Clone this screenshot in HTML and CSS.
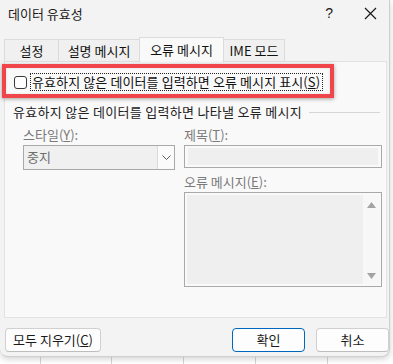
FILE: index.html
```html
<!DOCTYPE html>
<html>
	<head>
		<meta charset="UTF-8">
		<title>데이터 유효성</title>
		<link rel="stylesheet" href="styles.css">
	</head>
	<body>
		<div class="sheet">
			<div class="window">
				<div class="titlebar">
					<span class="title">데이터 유효성</span>
					<span class="help">?</span>
					<svg class="close" width="13" height="13" viewBox="0 0 13 13">
						<path d="M1 1L12 12M12 1L1 12" stroke="#1a1a1a" stroke-width="1.2" fill="none"/>
					</svg>
				</div>
				<div class="tabs">
					<div class="tab t1">설정</div>
					<div class="tab t2">설명 메시지</div>
					<div class="tab t3 on">오류 메시지</div>
					<div class="tab t4">IME 모드</div>
				</div>
				<div class="panel">
					<div class="check-row">
						<span class="checkbox"></span>
						<span class="check-label">유효하지 않은 데이터를 입력하면 오류 메시지 표시(<u>S</u>)</span>
					</div>
					<div class="group-head">
						<span>유효하지 않은 데이터를 입력하면 나타낼 오류 메시지</span>
						<span class="rule"></span>
					</div>
					<div class="fields">
						<div class="col left">
							<div class="label">스타일(<u>Y</u>):</div>
							<div class="select">
								<span class="value">중지</span>
								<span class="drop">
									<svg width="9" height="6" viewBox="0 0 9 6"><path d="M0.5 0.5L4.5 4.5L8.5 0.5" stroke="#5a5a5a" fill="none"/></svg>
								</span>
							</div>
						</div>
						<div class="col right">
							<div class="label">제목(<u>T</u>):</div>
							<div class="input"><div class="fill"></div></div>
							<div class="label second">오류 메시지(<u>E</u>):</div>
							<div class="textarea">
								<div class="fill"></div>
								<div class="scroll">
									<svg width="9" height="6" viewBox="0 0 9 6"><path d="M0 6L4.5 0L9 6Z" fill="#a3a3a3"/></svg>
									<svg width="9" height="6" viewBox="0 0 9 6"><path d="M0 0L4.5 6L9 0Z" fill="#a3a3a3"/></svg>
								</div>
							</div>
						</div>
					</div>
				</div>
				<div class="footer">
					<button class="btn clear">모두 지우기(<u>C</u>)</button>
					<span class="spacer"></span>
					<button class="btn ok">확인</button>
					<button class="btn cancel">취소</button>
				</div>
				<div class="highlight"></div>
			</div>
		</div>
	</body>
</html>
```

FILE: styles.css
```css
*{
	margin:0;
	padding:0;
	box-sizing:border-box;
}
body{
	width:393px;
	height:364px;
	overflow:hidden;
	font-family:"Noto Sans CJK KR","Noto Sans",sans-serif;
	font-size:13px;
	color:#1a1a1a;
	background:#fff;
}
.sheet{
	height:364px;
	background:
		linear-gradient(90deg,transparent 40px,#d6d6d6 40px,#d6d6d6 41px,transparent 41px),
		linear-gradient(90deg,transparent 111px,#d6d6d6 111px,#d6d6d6 112px,transparent 112px),
		linear-gradient(90deg,transparent 183px,#d6d6d6 183px,#d6d6d6 184px,transparent 184px),
		linear-gradient(90deg,transparent 255px,#d6d6d6 255px,#d6d6d6 256px,transparent 256px),
		linear-gradient(90deg,transparent 327px,#d6d6d6 327px,#d6d6d6 328px,transparent 328px),
		#fff;
}
.window{
	position:relative;
	width:390px;
	height:357px;
	background:#f3f3f3;
	border:1px solid #cfcfcf;
	border-top:none;
	border-left:none;
	border-radius:0 0 8px 8px;
	box-shadow:0 2px 6px rgba(0,0,0,0.18);
	display:flex;
	flex-direction:column;
}
.titlebar{
	height:28px;
	display:flex;
	align-items:center;
	padding:0 0 2px 8px;
}
.title{
	flex:1;
	line-height:15px;
}
.help{
	font-family:"Liberation Sans",sans-serif;
	font-size:14px;
	margin-right:31px;
}
.close{
	margin-right:12px;
}
.tabs{
	margin-top:9px;
	height:24px;
	padding-left:4px;
	display:flex;
	align-items:flex-end;
	position:relative;
	z-index:1;
}
.tab{
	height:22px;
	border:1px solid #dcdcdc;
	border-bottom:none;
	border-right:none;
	background:#f0f0f0;
	text-align:center;
	line-height:21px;
	color:#111;
	white-space:nowrap;
}
.t1{width:54px;}
.t2{width:81px;}
.t3{width:85px;}
.t4{width:61px;border-right:1px solid #dcdcdc;}
.tab.on{
	height:25px;
	margin-bottom:-1px;
	background:#f9f9f9;
	line-height:24px;
	border-right:1px solid #dcdcdc;
}
.tab.on + .tab{border-left:none;}
.panel{
	margin:0 2px 0 4px;
	height:257px;
	background:#f9f9f9;
	border:1px solid #e2e2e2;
	padding-top:11px;
}
.check-row{
	display:flex;
	align-items:center;
	height:18px;
	padding-left:9px;
}
.checkbox{
	width:13px;
	height:13px;
	border:1px solid #3a3a3a;
	border-radius:3px;
	background:#fff;
}
.check-label{
	margin-left:3px;
	height:18px;
	border:1px dotted #222;
	line-height:16px;
	padding:0 2px 0 1px;
	letter-spacing:0.1px;
	white-space:nowrap;
	color:#111;
}
u{
	text-decoration:underline;
	text-underline-offset:1px;
}
.group-head{
	display:flex;
	align-items:center;
	height:15px;
	margin-top:13px;
	padding:0 6px 0 8px;
	line-height:15px;
	letter-spacing:0.3px;
	color:#222;
	white-space:nowrap;
}
.rule{
	flex:1;
	height:1px;
	background:#d5d5d5;
	margin-left:7px;
	margin-top:1px;
}
.fields{
	display:grid;
	grid-template-columns:152px 198px;
	column-gap:9px;
	margin-top:8px;
	padding-left:18px;
}
.col{
	display:flex;
	flex-direction:column;
}
.label{
	height:15px;
	line-height:15px;
	color:#7a7a7a;
	margin-bottom:3px;
	white-space:nowrap;
}
.label.second{
	margin-top:6px;
}
.select{
	height:25px;
	border:1px solid #a9a9a9;
	background:#f0f0f0;
	display:flex;
	align-items:stretch;
}
.value{
	flex:1;
	line-height:22px;
	padding-left:3px;
	color:#6d6d6d;
}
.drop{
	width:17px;
	background:#fbfbfb;
	border-left:1px solid #d9d9d9;
	display:flex;
	align-items:center;
	justify-content:center;
}
.input{
	height:23px;
	border:1px solid #a9a9a9;
	padding:2px 3px;
	background:#f9f9f9;
}
.fill{
	height:100%;
	background:#efefef;
}
.textarea{
	height:95px;
	border:1px solid #a9a9a9;
	background:#f9f9f9;
	padding:2px 1px 2px 2px;
	display:flex;
}
.textarea .fill{
	flex:1;
}
.scroll{
	width:17px;
	background:#f7f7f7;
	display:flex;
	flex-direction:column;
	justify-content:space-between;
	align-items:center;
	padding:7px 0 5px;
}
.footer{
	display:flex;
	align-items:center;
	padding:10px 0 0 5px;
}
.spacer{flex:1;}
.btn{
	height:24px;
	font-family:"Noto Sans CJK KR","Noto Sans",sans-serif;
	font-size:13px;
	color:#1a1a1a;
	background:#fdfdfd;
	border:1px solid #d0d0d0;
	border-bottom-color:#bdbdbd;
	border-radius:4px;
	line-height:20px;
}
.clear{width:96px;}
.ok{
	width:73px;
	border:1px solid #0067c0;
	margin-right:11px;
}
.cancel{width:73px;}
.highlight{
	position:absolute;
	left:2px;
	top:64px;
	width:332px;
	height:34px;
	border:4px solid #f0454a;
	box-shadow:0 1px 4px rgba(0,0,0,0.35),inset 0 0 2px rgba(0,0,0,0.15);
	z-index:5;
}
```
